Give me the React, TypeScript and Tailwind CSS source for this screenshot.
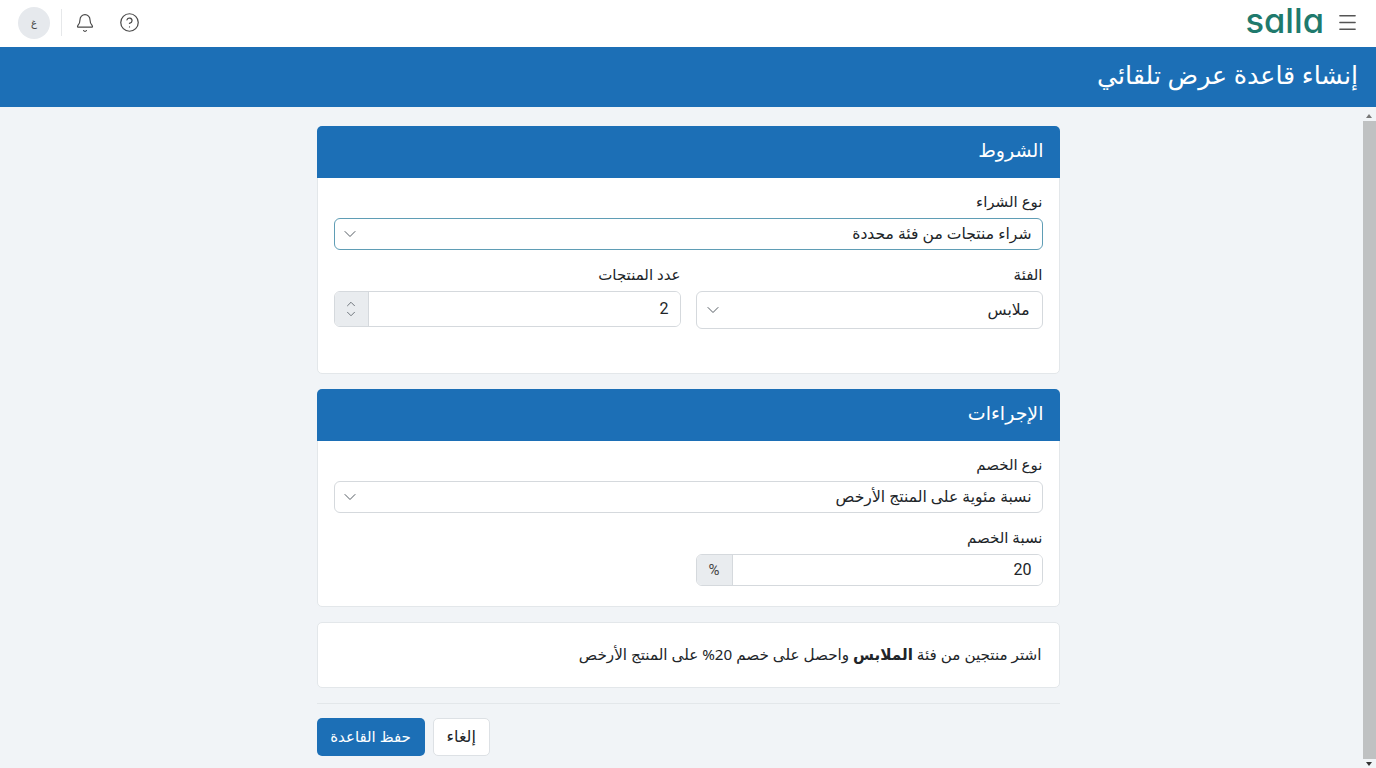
import React from 'react';
import { Bell, ChevronDown, ChevronUp, CircleHelp, Menu } from 'lucide-react';

const Field = ({ label, children, className = '' }: { label: string; children: React.ReactNode; className?: string }) => (
  <div className={className}>
    <label className="block h-[24px] text-[15px] leading-[24px] text-[#212529] mb-[5px]">{label}</label>
    {children}
  </div>
);

const SelectBox = ({ value, height, focused, pad }: { value: string; height: string; focused?: boolean; pad: string }) => (
  <div className={`flex items-center justify-between bg-white rounded-[6px] border ${height} ${pad} ${focused ? 'border-[#5f9db5]' : 'border-[#d5d9dd]'}`}>
    <span className="text-[15.6px] leading-[20px] pb-[2px] text-[#212529]">{value}</span>
    <ChevronDown size={20} strokeWidth={1.2} className="text-[#555c63]" />
  </div>
);

const Card = ({ title, children }: { title: string; children: React.ReactNode }) => (
  <section className="bg-white rounded-[5px] border border-[#e3e7ea]">
    <h2 className="h-[52px] -mx-px -mt-px rounded-t-[5px] flex items-center px-[16px] pb-[4px] bg-[#1c6fb6] text-white text-[19px] font-normal">{title}</h2>
    {children}
  </section>
);

export default function App() {
  return (
    <div dir="rtl" className="relative h-[768px] overflow-hidden bg-[#f1f4f7] font-['Noto_Sans','DejaVu_Sans',sans-serif]">
      {/* Header */}
      <header className="h-[47px] bg-white flex items-center justify-between pr-[17px] pl-[18px] pb-[2px]">
        <div className="flex items-center gap-[12px]">
          <Menu size={23} strokeWidth={1.4} className="text-[#555]" />
          <span dir="ltr" className="text-[#1f7a6d] text-[34.5px] leading-none font-medium pb-[3px] font-['Inter',sans-serif] [font-feature-settings:'cv11']">salla</span>
        </div>
        <div dir="ltr" className="flex items-center">
          <div className="size-[32px] rounded-full bg-[#e6e9ed] flex items-center justify-center text-[10px] text-[#444]">غ</div>
          <div className="w-px h-[27px] bg-[#e6e8ea] ml-[11px] mr-[13px]" />
          <Bell size={20} strokeWidth={1.4} className="text-[#4a4a4a]" />
          <CircleHelp size={21} strokeWidth={1.4} className="text-[#4a4a4a] ml-[24px]" />
        </div>
      </header>

      <div className="h-[60px] bg-[#1c6fb6] flex items-center px-[18px]">
        <h1 className="text-white text-[25.3px] pb-[4px] font-normal">إنشاء قاعدة عرض تلقائي</h1>
      </div>

      <main className="w-[743px] mx-auto pt-[19px] flex flex-col gap-[15px]">
        <Card title="الشروط">
          <div className="px-[16px] pt-[11px] h-[195px]">
            <Field label="نوع الشراء">
              <SelectBox value="شراء منتجات من فئة محددة" height="h-[32px]" pad="pr-[10px] pl-[5px]" focused />
            </Field>
            <div className="flex gap-[15px] mt-[12px] items-start">
              <Field label="الفئة" className="w-[347px]">
                <SelectBox value="ملابس" height="h-[38px]" pad="pr-[12px] pl-[6px]" />
              </Field>
              <Field label="عدد المنتجات" className="w-[347px]">
                <div className="flex h-[36px] rounded-[6px] border border-[#d5d9dd] overflow-hidden">
                  <div className="flex-1 bg-white flex items-center px-[11px] text-[16px] font-['Roboto',sans-serif] text-[#212529]">2</div>
                  <div className="w-[34px] bg-[#e9ecef] border-r border-[#d5d9dd] flex flex-col items-center justify-center text-[#555c63]">
                    <ChevronUp size={14} strokeWidth={1.4} className="-mb-[2px]" />
                    <ChevronDown size={14} strokeWidth={1.4} className="-mt-[2px]" />
                  </div>
                </div>
              </Field>
            </div>
          </div>
        </Card>

        <Card title="الإجراءات">
          <div className="px-[16px] pt-[11px] h-[165px]">
            <Field label="نوع الخصم">
              <SelectBox value="نسبة مئوية على المنتج الأرخص" height="h-[32px]" pad="pr-[10px] pl-[5px]" />
            </Field>
            <Field label="نسبة الخصم" className="w-[347px] mt-[12px]">
              <div className="flex h-[32px] rounded-[6px] border border-[#d5d9dd] overflow-hidden">
                <div className="flex-1 bg-white flex items-center px-[10px] text-[16px] font-['Roboto',sans-serif] text-[#212529]">20</div>
                <div className="w-[36px] bg-[#e9ecef] border-r border-[#d5d9dd] flex items-center justify-center text-[15px] font-['Roboto',sans-serif] text-[#444]">%</div>
              </div>
            </Field>
          </div>
        </Card>

        <section className="h-[66px] bg-white rounded-[5px] border border-[#e3e7ea] flex items-center px-[17px] pb-[2px] text-[15.2px] text-[#212529]">
          <p>اشتر منتجين من فئة <strong className="font-bold">الملابس</strong> واحصل على خصم 20% على المنتج الأرخص</p>
        </section>

        <div className="border-t border-[#e3e7ea] pt-[14px] flex justify-end gap-[8px]">
          <button className="h-[38px] px-[13px] pb-[2px] bg-white rounded-[5px] border border-[#dde1e5] text-[16px] text-[#212529]">إلغاء</button>
          <button className="h-[38px] w-[108px] pb-[2px] bg-[#1c6fb6] rounded-[5px] text-[15px] text-white">حفظ القاعدة</button>
        </div>
      </main>

      {/* Scrollbar */}
      <div dir="ltr" className="absolute right-0 top-[107px] bottom-0 w-[14px] flex flex-col items-center">
        <div className="w-0 h-0 mt-[7px] mb-[3px] border-x-[3px] border-x-transparent border-b-[4px] border-b-[#777]" />
        <div className="flex-1 w-[13px] bg-[#bfc1c2]" />
        <div className="w-0 h-0 mt-[3px] mb-[2px] border-x-[3px] border-x-transparent border-t-[4px] border-t-[#333]" />
      </div>
    </div>
  );
}
